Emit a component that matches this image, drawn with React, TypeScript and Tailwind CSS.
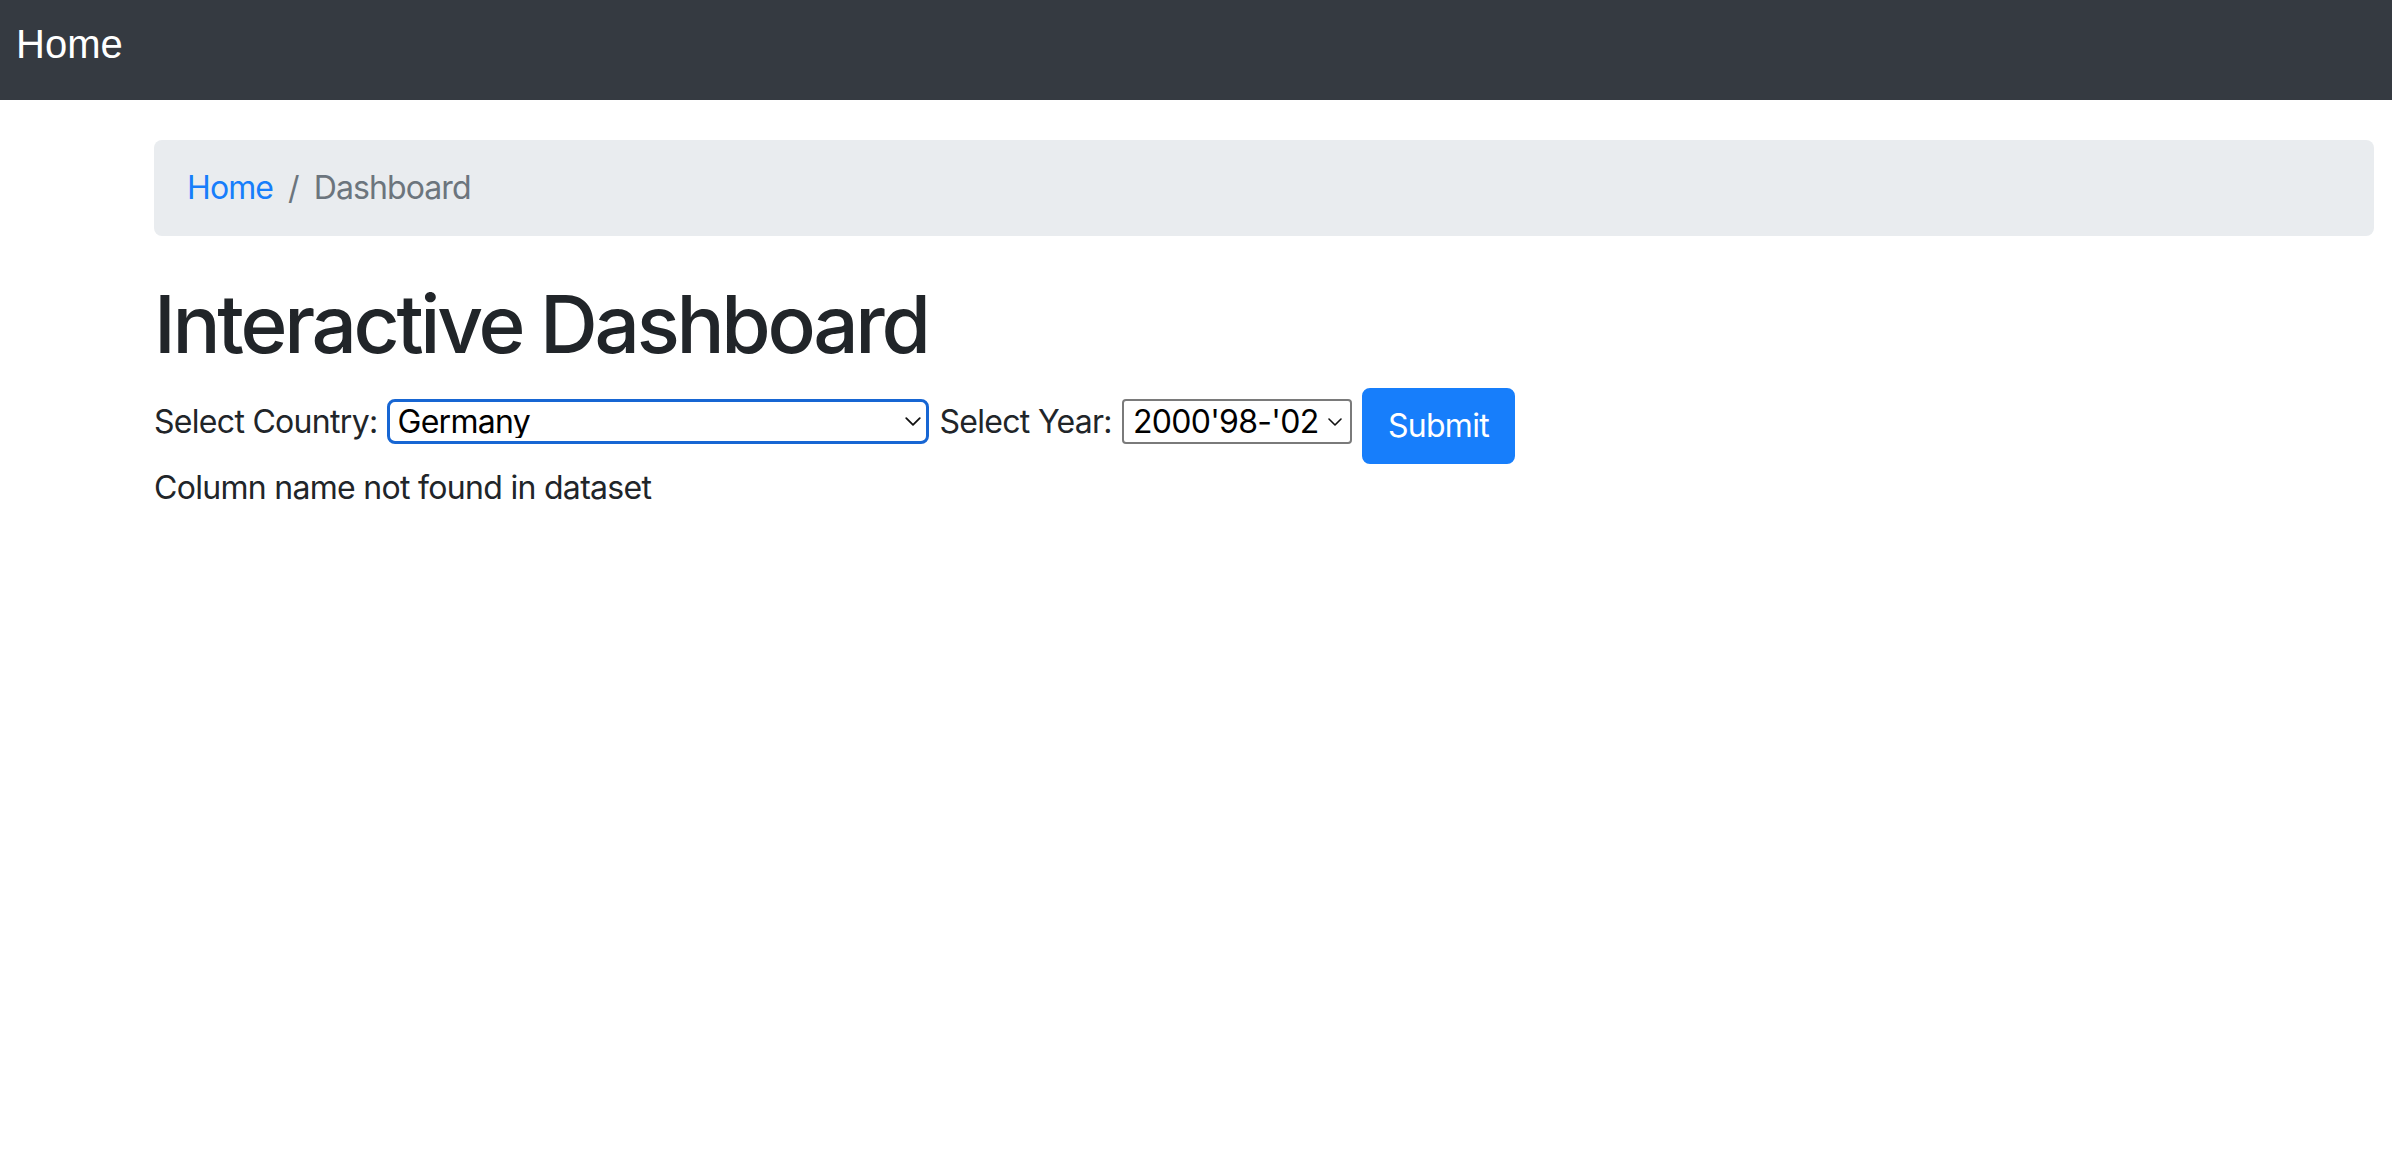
import React from "react";

function Chevron({ className }: { className?: string }) {
  return (
    <svg viewBox="0 0 14 8" className={className} fill="none" stroke="#111" strokeWidth="1.6" strokeLinecap="round" strokeLinejoin="round">
      <polyline points="1,1 7,7 13,1" />
    </svg>
  );
}

export default function App() {
  return (
    <div className="min-h-screen bg-white font-['Inter','Liberation_Sans',sans-serif] tracking-[-0.7px] text-[#212529]">
      {/* Navbar */}
      <nav className="h-[100px] bg-[#353a41] pl-[16px] pt-[14px]">
        <a href="#" className="font-['Liberation_Sans',Arial,sans-serif] text-[40px] leading-[60px] tracking-normal text-white">
          Home
        </a>
      </nav>

      <div className="ml-[154px] mr-[18px] mt-[40px]">
        {/* Breadcrumb */}
        <ol className="flex h-[96px] items-center rounded-[8px] bg-[#e9ecef] px-[33px] text-[32px] leading-[48px] tracking-[-0.9px]">
          <li>
            <a href="#" className="text-[#177efb]">Home</a>
          </li>
          <li className="px-[15px] text-[#6c757d]">/</li>
          <li className="text-[#6c757d]">Dashboard</li>
        </ol>

        {/* Title */}
        <h1 className="mt-[40px] text-[80px] font-medium leading-[96px] tracking-[-3.3px]">
          Interactive Dashboard
        </h1>

        {/* Form */}
        <form className="mt-[16px] flex items-start gap-[10px] text-[32px] leading-[48px]">
          <label className="mt-[10px]">Select Country:</label>
          <div className="mt-[11px] flex h-[45px] w-[542px] items-center rounded-[8px] border-[3px] border-[#1766d3] pl-[7px] pr-[5px]">
            <select className="h-full flex-1 appearance-none bg-transparent pt-[1px] leading-none tracking-[-0.7px] text-black outline-none">
              <option>Germany</option>
            </select>
            <Chevron className="h-[9px] w-[16px]" />
          </div>
          <label className="mt-[10px]">Select Year:</label>
          <div className="mt-[11px] flex h-[45px] w-[230px] items-center rounded-[4px] border-2 border-[#7a7a7a] pl-[9px] pr-[8px]">
            <select className="h-full flex-1 appearance-none bg-transparent pt-[1px] leading-none tracking-[-0.7px] text-black outline-none">
              <option>2000'98-'02</option>
            </select>
            <Chevron className="h-[8px] w-[14px]" />
          </div>
          <button
            type="button"
            className="h-[76px] rounded-[8px] border-2 border-[#177efb] bg-[#177efb] px-[24px] text-[32px] leading-[48px] text-white"
          >
            Submit
          </button>
        </form>

        <p className="text-[32px] leading-[48px]">Column name not found in dataset</p>
      </div>
    </div>
  );
}
